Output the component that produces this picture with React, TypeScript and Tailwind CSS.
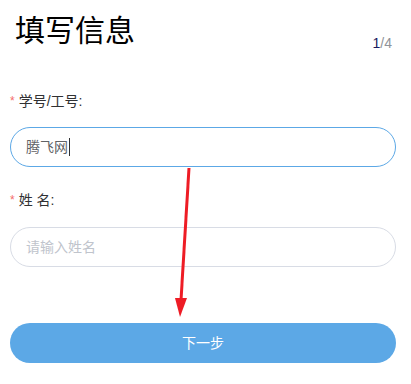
export default function App() {
    return (
        <div
            className="relative h-[384px] w-[411px] overflow-hidden bg-white"
            style={{ fontFamily: '"Liberation Sans", "Noto Sans CJK SC", sans-serif' }}
        >
            <div className="flex items-end justify-between pl-[15px] pr-[19px] pt-[11px]">
                <h1 className="text-[30px] font-normal leading-[40px] text-black">填写信息</h1>
                <div className="text-[14px] leading-[16px] text-[#909399]">
                    <span className="text-[#1a1a5e]">1</span>/4
                </div>
            </div>

            <div className="pl-[10px] pr-[15px]">
                <div className="mt-[40px] flex items-center text-[14px] leading-[20px] text-[#303133]">
                    <span className="mr-[4px] text-[12px] text-[#f56c6c]">*</span>学号/工号:
                </div>
                <div className="mt-[16px] flex h-[40px] items-center rounded-full border border-[#5ca8e6] px-[15px] text-[14px] text-[#606266]">
                    腾飞网<span className="ml-px h-[18px] w-px bg-[#303133]" />
                </div>

                <div className="mt-[23px] flex items-center text-[14px] leading-[20px] text-[#303133]">
                    <span className="mr-[4px] text-[12px] text-[#f56c6c]">*</span>姓 名:
                </div>
                <div className="mt-[17px] flex h-[40px] items-center rounded-full border border-[#d8dce5] px-[15px] text-[14px] text-[#c0c4cc]">
                    请输入姓名
                </div>

                <button className="mt-[56px] flex h-[40px] w-full items-center justify-center rounded-full bg-[#5ca8e6] text-[14px] text-white">
                    下一步
                </button>
            </div>

            <svg className="pointer-events-none absolute left-0 top-0" width="411" height="384">
                <line x1="189" y1="168" x2="181" y2="300" stroke="#ee1c25" strokeWidth="3" />
                <polygon points="175,298 187,298 180,317" fill="#ee1c25" />
            </svg>
        </div>
    );
}
